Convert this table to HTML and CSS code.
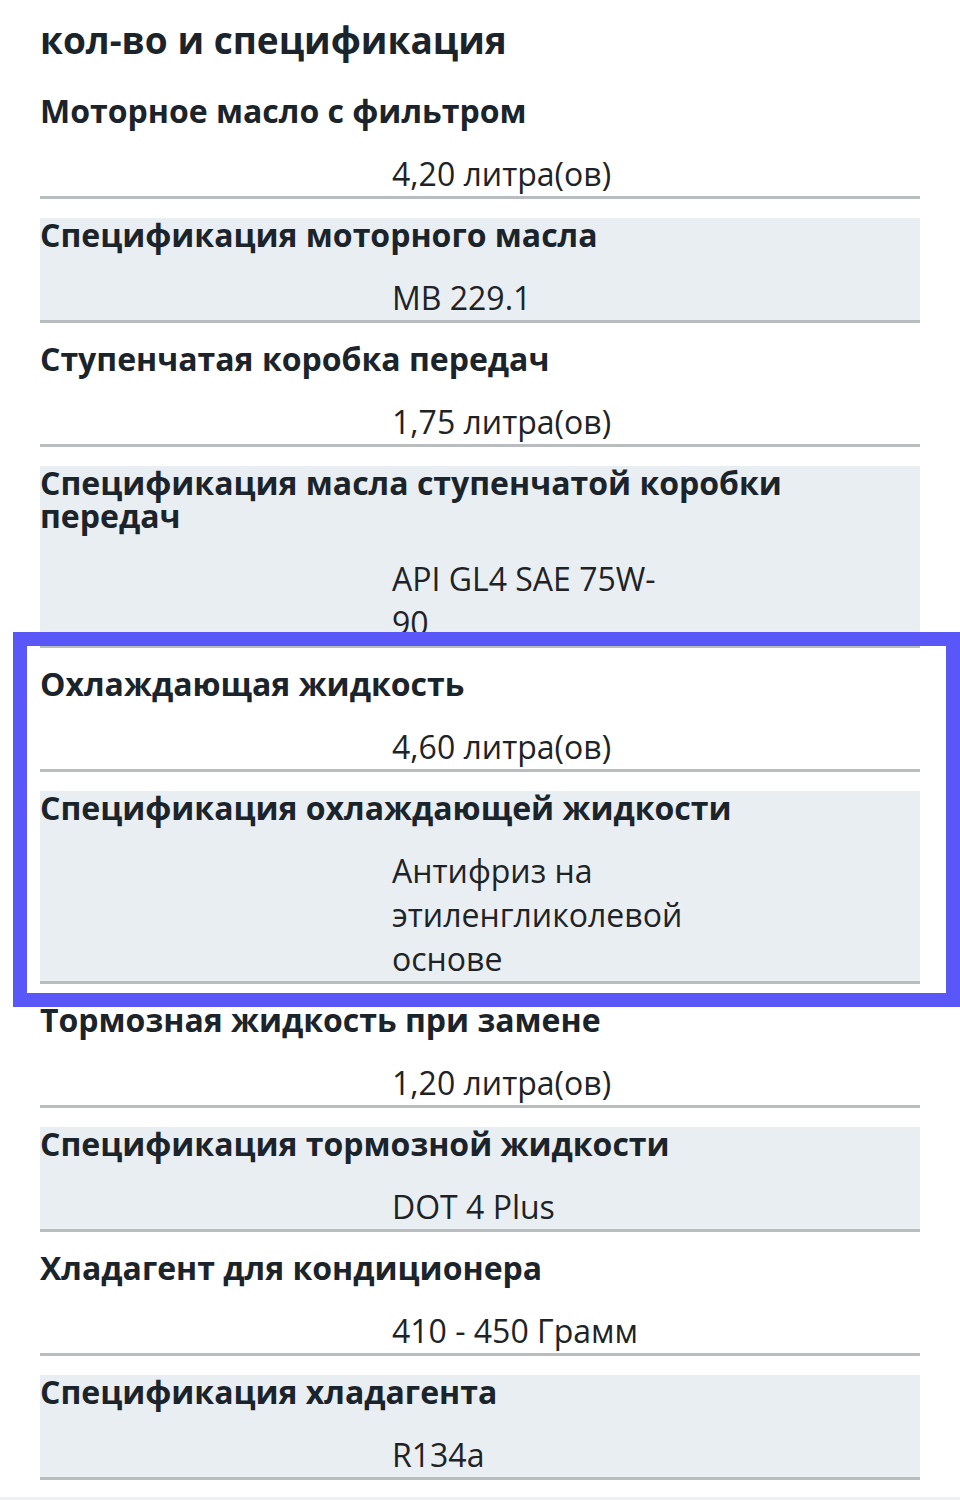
FILE: index.html
```html
<!DOCTYPE html>
<html lang="ru">
<head>
<meta charset="utf-8">
<title>кол-во и спецификация</title>
<link rel="stylesheet" href="styles.css">
</head>
<body>
<main class="page">
  <h2 class="title">кол-во и спецификация</h2>
  <div class="specs">
    <div class="row">
      <div class="label">Моторное масло с фильтром</div>
      <div class="value">4,20 литра(ов)</div>
    </div>
    <div class="row alt">
      <div class="label">Спецификация моторного масла</div>
      <div class="value">MB 229.1</div>
    </div>
    <div class="row">
      <div class="label">Ступенчатая коробка передач</div>
      <div class="value">1,75 литра(ов)</div>
    </div>
    <div class="row alt">
      <div class="label">Спецификация масла ступенчатой коробки передач</div>
      <div class="value">API GL4 SAE 75W-90</div>
    </div>
    <div class="highlight">
      <div class="row">
        <div class="label">Охлаждающая жидкость</div>
        <div class="value">4,60 литра(ов)</div>
      </div>
      <div class="row alt">
        <div class="label">Спецификация охлаждающей жидкости</div>
        <div class="value">Антифриз на этиленгликолевой основе</div>
      </div>
    </div>
    <div class="row">
      <div class="label">Тормозная жидкость при замене</div>
      <div class="value">1,20 литра(ов)</div>
    </div>
    <div class="row alt">
      <div class="label">Спецификация тормозной жидкости</div>
      <div class="value">DOT 4 Plus</div>
    </div>
    <div class="row">
      <div class="label">Хладагент для кондиционера</div>
      <div class="value">410 - 450 Грамм</div>
    </div>
    <div class="row alt">
      <div class="label">Спецификация хладагента</div>
      <div class="value">R134a</div>
    </div>
  </div>
  <div class="next-section"></div>
</main>
</body>
</html>
```

FILE: styles.css
```css
html, body {
  margin: 0;
  padding: 0;
  background: #ffffff;
}

body {
  font-family: "Open Sans", "Noto Sans", sans-serif;
  color: #1b232b;
  overflow: hidden;
}

.page {
  padding-top: 20px;
}

.title {
  margin: 0 40px;
  font-size: 37px;
  line-height: 40px;
  font-weight: 700;
  color: #1b232b;
}

.specs {
  margin: 0 40px;
  padding-top: 15px;
}

.row {
  margin-top: 19px;
  padding-bottom: 0;
  border-bottom: 3px solid #babdc0;
}

.row.alt {
  background: #e9eef2;
}

.label {
  font-size: 32px;
  line-height: 33px;
  font-weight: 700;
  color: #1b232b;
}

.value {
  margin-top: 25px;
  margin-left: 40%;
  width: 33.333%;
  font-size: 32px;
  line-height: 44px;
  font-weight: 400;
  color: #202326;
}

.highlight {
  position: relative;
}

.highlight::after {
  content: "";
  position: absolute;
  top: -35px;
  left: -27px;
  right: -40px;
  bottom: -23px;
  border: 14px solid #5a57f8;
  pointer-events: none;
}

.next-section {
  margin-top: 17px;
  height: 20px;
  background: #eef1f3;
}
```
